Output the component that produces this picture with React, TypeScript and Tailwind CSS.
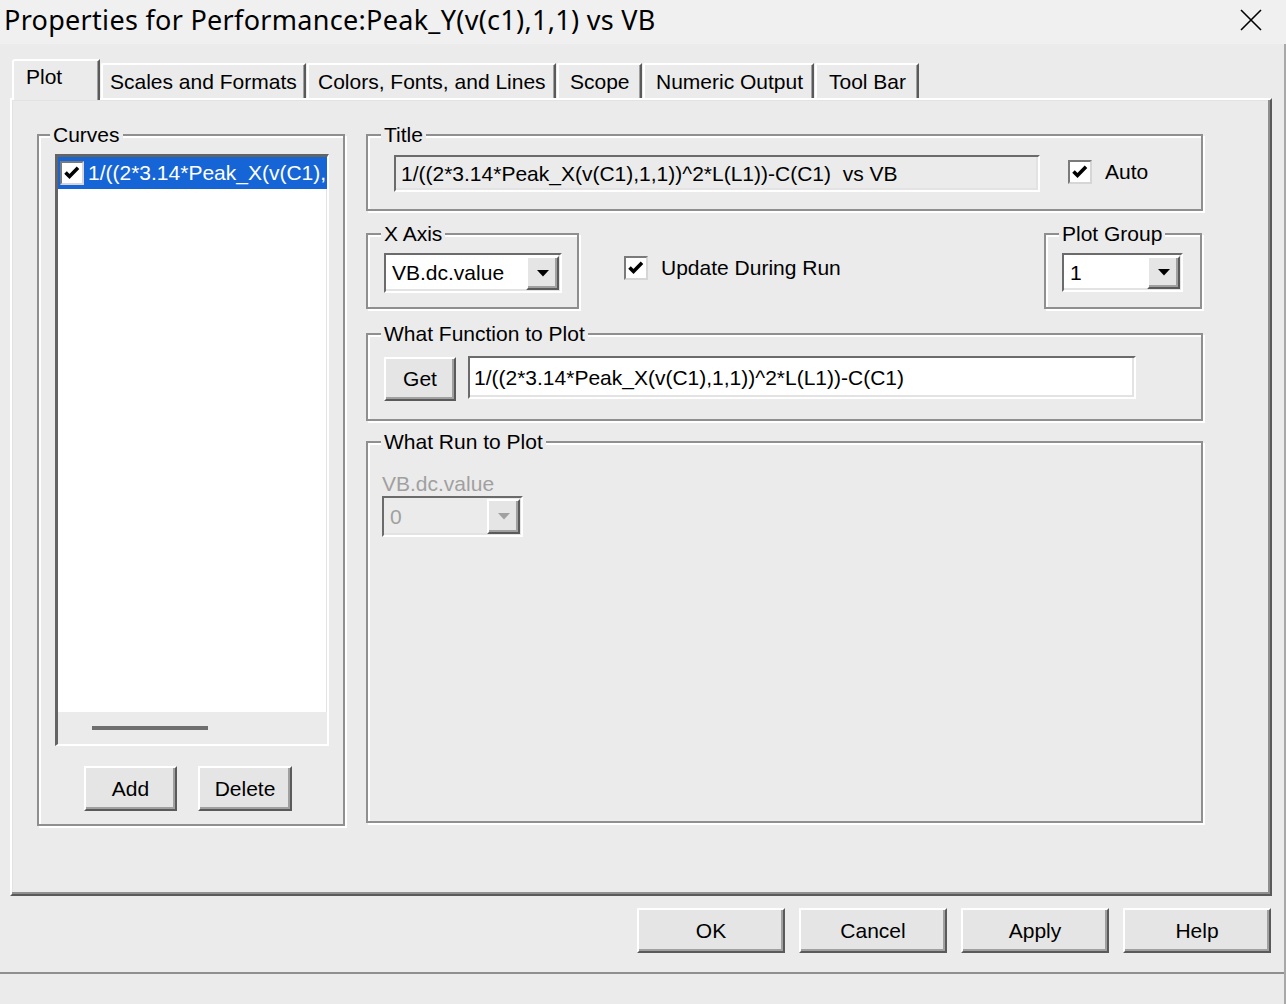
import React from "react";

const raised =
  "bg-[#e5e5e5] border-t-2 border-l-2 border-white border-r-2 border-b-2 border-r-[#5a5a5a] border-b-[#5a5a5a] shadow-[inset_-2px_-2px_0_#a0a0a0] flex items-center justify-center";

const sunken =
  "border-t-2 border-l-2 border-[#6b6b6b] border-r-2 border-b-2 border-r-white border-b-white shadow-[inset_-2px_-2px_0_#e3e3e3]";

function Group({
  label,
  className,
  labelClass = "left-[13px]",
  children,
}: {
  label: string;
  className: string;
  labelClass?: string;
  children?: React.ReactNode;
}) {
  return (
    <div
      className={`relative border-2 border-[#8f8f8f] shadow-[2px_2px_0_#ffffff,inset_2px_2px_0_#ffffff] ${className}`}
    >
      <span
        className={`absolute top-[-13px] px-[3px] bg-[#ebebeb] leading-[24px] whitespace-nowrap ${labelClass}`}
      >
        {label}
      </span>
      {children}
    </div>
  );
}

function Check({ className = "" }: { className?: string }) {
  return (
    <div
      className={`w-[24px] h-[24px] shrink-0 bg-white border-2 border-[#7a7a7a] border-r-[#d6d6d6] border-b-[#d6d6d6] flex items-center justify-center ${className}`}
    >
      <svg width="18" height="18" viewBox="0 0 18 18">
        <path d="M2.5 8.5 L6.5 12.5 L15 3.8" fill="none" stroke="#000" strokeWidth="3.6" />
      </svg>
    </div>
  );
}

function Arrow({ disabled = false }: { disabled?: boolean }) {
  return (
    <svg width="12" height="7" viewBox="0 0 12 7">
      <polygon points="0,0 12,0 6,6.5" fill={disabled ? "#a0a0a0" : "#000"} />
    </svg>
  );
}

function Combo({
  value,
  className,
  disabled = false,
}: {
  value: string;
  className: string;
  disabled?: boolean;
}) {
  return (
    <div className={`flex ${sunken} ${disabled ? "bg-[#ebebeb]" : "bg-white"} ${className}`}>
      <div
        className={`flex-1 flex items-center pl-[6px] whitespace-nowrap ${disabled ? "text-[#a0a0a0]" : ""}`}
      >
        {value}
      </div>
      <div className="py-[1px] pr-[1px] flex">
        <div className={`w-[33px] ${raised}`}>
          <Arrow disabled={disabled} />
        </div>
      </div>
    </div>
  );
}

const tabs: { label: string; cls: string }[] = [
  { label: "Scales and Formats", cls: "w-[205px] pl-[7px]" },
  { label: "Colors, Fonts, and Lines", cls: "w-[249px] pl-[9px]" },
  { label: "Scope", cls: "w-[85px] pl-[11px]" },
  { label: "Numeric Output", cls: "w-[171px] pl-[11px]" },
  { label: "Tool Bar", cls: "w-[104px] pl-[12px]" },
];

export default function App() {
  return (
    <div className="w-[1286px] h-[1004px] bg-[#ebebeb] flex flex-col overflow-hidden font-['Liberation_Sans',Arial,sans-serif] text-[21px] leading-[24px] text-black">
      {/* Title bar */}
      <div className="h-[44px] shrink-0 bg-[#f0f0f0] flex items-center justify-between pl-[4px] pr-[24px]">
        <span className="font-['Noto_Sans',sans-serif] text-[27px] tracking-[0.3px] leading-[30px] mt-[-4px] whitespace-nowrap">
          Properties for Performance:Peak_Y(v(c1),1,1) vs VB
        </span>
        <svg width="22" height="22" viewBox="0 0 22 22" className="mt-[-4px]">
          <path d="M1 1 L21 21 M21 1 L1 21" stroke="#000" strokeWidth="1.6" />
        </svg>
      </div>

      <div className="flex-1 flex flex-col border-r-2 border-[#a8a8a8]">
        {/* Tabs */}
        <div className="h-[54px] shrink-0 flex items-end pl-[12px]">
          <div className="relative z-10 mb-[-2px] w-[88px] h-[41px] mr-[1px] bg-[#ebebeb] border-t-2 border-l-2 border-white border-r-2 border-r-[#5a5a5a] rounded-tl-[3px] shadow-[inset_-1px_0_0_#a0a0a0] flex items-start pl-[12px] pt-[4px]">
            Plot
          </div>
          {tabs.map((t) => (
            <div
              key={t.label}
              className={`h-[35px] mr-[1px] border-t-2 border-l-2 border-white border-r-2 border-r-[#5a5a5a] rounded-tl-[2px] shadow-[inset_-1px_0_0_#a0a0a0] flex items-center whitespace-nowrap ${t.cls}`}
            >
              {t.label}
            </div>
          ))}
        </div>

        {/* Panel */}
        <div className="ml-[10px] w-[1262px] h-[798px] shrink-0 border-t-2 border-l-2 border-white border-r-2 border-b-2 border-r-[#5a5a5a] border-b-[#5a5a5a] shadow-[inset_-2px_-2px_0_#8f8f8f,inset_1px_1px_0_#e3e3e3] flex items-start pt-[34px]">
          {/* Curves */}
          <Group label="Curves" labelClass="left-[11px]" className="ml-[25px] w-[308px] h-[692px] flex flex-col pl-[16px] pt-[18px]">
            <div className="w-[274px] h-[592px] border-t-[3px] border-l-[3px] border-[#646464] border-r-2 border-b-2 border-r-white border-b-white shadow-[inset_-1px_-1px_0_#e3e3e3] bg-white flex flex-col">
              <div className="h-[32px] bg-[#1665d6] flex items-center overflow-hidden">
                <Check className="ml-[2px] border-[#6f6f6f] border-r-[#6f6f6f] border-b-[#6f6f6f]" />
                <span className="ml-[4px] text-white whitespace-nowrap overflow-hidden">1/((2*3.14*Peak_X(v(C1),</span>
              </div>
              <div className="flex-1" />
              <div className="h-[32px] bg-[#ebebeb] pl-[34px] pt-[14px]">
                <div className="w-[116px] h-[4px] bg-[#6f6f6f]" />
              </div>
            </div>
            <div className="flex ml-[29px] mt-[20px] gap-[21px]">
              <div className={`w-[93px] h-[45px] ${raised}`}>Add</div>
              <div className={`w-[94px] h-[45px] ${raised}`}>Delete</div>
            </div>
          </Group>

          {/* Right column */}
          <div className="ml-[21px] w-[837px] flex flex-col">
            <Group label="Title" className="h-[77px] flex items-start pl-[26px] pt-[19px]">
              <div className={`w-[646px] h-[37px] bg-[#ebebeb] ${sunken} flex items-center pl-[5px] whitespace-pre overflow-hidden`}>
                {"1/((2*3.14*Peak_X(v(C1),1,1))^2*L(L1))-C(C1)  vs VB"}
              </div>
              <div className="ml-[28px] mt-[5px] flex items-center">
                <Check />
                <span className="ml-[13px]">Auto</span>
              </div>
            </Group>

            <div className="mt-[22px] flex items-start">
              <Group label="X Axis" className="w-[213px] h-[76px] pl-[16px] pt-[18px]">
                <Combo value="VB.dc.value" className="w-[178px] h-[40px]" />
              </Group>
              <div className="ml-[45px] mt-[23px] flex items-center">
                <Check />
                <span className="ml-[13px]">Update During Run</span>
              </div>
              <Group label="Plot Group" className="ml-auto mr-[1px] w-[158px] h-[76px] pl-[16px] pt-[18px]">
                <Combo value="1" className="w-[121px] h-[39px]" />
              </Group>
            </div>

            <Group label="What Function to Plot" className="mt-[24px] h-[88px] flex items-start pl-[16px] pt-[22px]">
              <div className={`w-[72px] h-[44px] ${raised}`}>Get</div>
              <div className={`ml-[12px] mt-[-1px] w-[668px] h-[43px] bg-white ${sunken} flex items-center pl-[4px] whitespace-nowrap overflow-hidden`}>
                1/((2*3.14*Peak_X(v(C1),1,1))^2*L(L1))-C(C1)
              </div>
            </Group>

            <Group label="What Run to Plot" className="mt-[20px] h-[382px] flex flex-col items-start pl-[14px] pt-[29px]">
              <div className="text-[#a0a0a0] whitespace-nowrap">VB.dc.value</div>
              <Combo value="0" disabled className="w-[141px] h-[41px]" />
            </Group>
          </div>
        </div>

        {/* Bottom buttons */}
        <div className="mt-[12px] flex justify-end gap-[14px] pr-[13px]">
          <div className={`w-[148px] h-[45px] ${raised}`}>OK</div>
          <div className={`w-[148px] h-[45px] ${raised}`}>Cancel</div>
          <div className={`w-[148px] h-[45px] ${raised}`}>Apply</div>
          <div className={`w-[148px] h-[45px] ${raised}`}>Help</div>
        </div>
        <div className="mt-[19px] h-[2px] bg-[#8f8f8f]" />
      </div>
    </div>
  );
}
